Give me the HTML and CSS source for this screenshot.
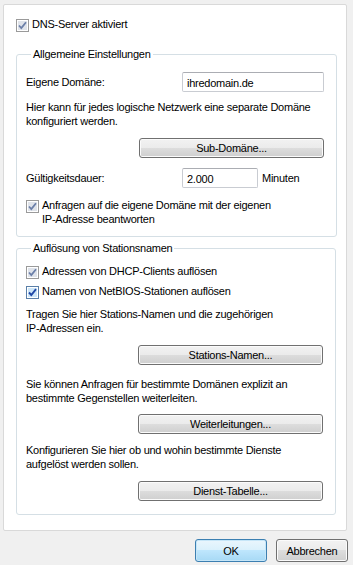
FILE: index.html
```html
<!DOCTYPE html>
<html lang="de">
  <head>
    <meta charset="UTF-8" />
    <title>DNS</title>
    <link rel="stylesheet" href="styles.css">
  </head>
  <body>
    <div class="panel">
      <label class="check top_check">
        <svg class="box" width="13" height="13" viewBox="0 0 13 13"><rect x="0.5" y="0.5" width="12" height="12" fill="#fff" stroke="#9a9a9a"/><rect x="2" y="2" width="9" height="9" fill="#dfe3ea"/><path d="M3 6.5 L5.3 9 L10 3.2" fill="none" stroke="#6b7fa8" stroke-width="1.8"/></svg>
        <span>DNS-Server aktiviert</span>
      </label>

      <fieldset class="group">
        <legend>Allgemeine Einstellungen</legend>
        <div class="row first">
          <span class="label">Eigene Domäne:</span>
          <div class="field wide">ihredomain.de</div>
        </div>
        <p class="text">Hier kann für jedes logische Netzwerk eine separate Domäne<br>konfiguriert werden.</p>
        <button class="btn">Sub-Domäne...</button>
        <div class="row time_row">
          <span class="label">Gültigkeitsdauer:</span>
          <div class="field short">2.000</div>
          <span class="unit">Minuten</span>
        </div>
        <label class="check answer">
          <svg class="box" width="13" height="13" viewBox="0 0 13 13"><rect x="0.5" y="0.5" width="12" height="12" fill="#fff" stroke="#9a9a9a"/><rect x="2" y="2" width="9" height="9" fill="#dfe3ea"/><path d="M3 6.5 L5.3 9 L10 3.2" fill="none" stroke="#6b7fa8" stroke-width="1.8"/></svg>
          <span>Anfragen auf die eigene Domäne mit der eigenen<br>IP-Adresse beantworten</span>
        </label>
      </fieldset>

      <fieldset class="group second">
        <legend>Auflösung von Stationsnamen</legend>
        <label class="check dhcp">
          <svg class="box" width="13" height="13" viewBox="0 0 13 13"><rect x="0.5" y="0.5" width="12" height="12" fill="#fff" stroke="#9a9a9a"/><rect x="2" y="2" width="9" height="9" fill="#dfe3ea"/><path d="M3 6.5 L5.3 9 L10 3.2" fill="none" stroke="#6b7fa8" stroke-width="1.8"/></svg>
          <span>Adressen von DHCP-Clients auflösen</span>
        </label>
        <label class="check netbios">
          <svg class="box" width="13" height="13" viewBox="0 0 13 13"><rect x="0.5" y="0.5" width="12" height="12" fill="#fff" stroke="#5a7fa8"/><rect x="2" y="2" width="9" height="9" fill="#cde6f8"/><path d="M3 6.5 L5.3 9 L10 3.2" fill="none" stroke="#1f47a6" stroke-width="1.9"/></svg>
          <span>Namen von NetBIOS-Stationen auflösen</span>
        </label>
        <p class="text">Tragen Sie hier Stations-Namen und die zugehörigen<br>IP-Adressen ein.</p>
        <button class="btn">Stations-Namen...</button>
        <p class="text gap">Sie können Anfragen für bestimmte Domänen explizit an<br>bestimmte Gegenstellen weiterleiten.</p>
        <button class="btn tight">Weiterleitungen...</button>
        <p class="text tight">Konfigurieren Sie hier ob und wohin bestimmte Dienste<br>aufgelöst werden sollen.</p>
        <button class="btn">Dienst-Tabelle...</button>
      </fieldset>
    </div>

    <div class="footer">
      <button class="btn dlg ok">OK</button>
      <button class="btn dlg">Abbrechen</button>
    </div>
  </body>
</html>
```

FILE: styles.css
```css
body {
  margin: 0;
  background: #f0f0f0;
  color: #000;
  font-family: "Liberation Sans", Arial, sans-serif;
  font-size: 11px;
  letter-spacing: -0.25px;
  line-height: 14px;
}
.panel {
  box-sizing: border-box;
  width: 344px;
  height: 527px;
  margin: 4px 0 0 3px;
  padding: 14px 0 0 12px;
  background: #fff;
  border: 1px solid #d9d9d9;
  border-radius: 2px;
}
.check {
  display: flex;
  align-items: flex-start;
}
.check .box {
  flex: none;
}
.check span {
  padding-left: 3px;
  margin-top: -2px;
}
.group {
  box-sizing: border-box;
  width: 320px;
  margin: 15px 0 0 0;
  padding: 0 12px 10px 9px;
  border: 1px solid #d5dfe5;
  border-radius: 3px;
}
.group legend {
  padding: 0 2px;
  margin-left: 5px;
  line-height: 14px;
}
.second {
  margin-top: 4px;
  padding-bottom: 13px;
}
.row {
  display: flex;
  align-items: center;
  height: 20px;
}
.row.first {
  margin-top: 11px;
}
.label {
  width: 156px;
  flex: none;
}
.field {
  box-sizing: border-box;
  height: 20px;
  padding: 3px 4px 2px;
  border: 1px solid #c9ccd2;
  border-top-color: #abadb3;
  border-radius: 2px;
  background: #fff;
}
.wide {
  width: 142px;
}
.short {
  width: 76px;
}
.unit {
  margin-left: 4px;
}
.text {
  margin: 8px 0 0 0;
}
.text.gap {
  margin-top: 12px;
}
.text.tight {
  margin-top: 9px;
}
.btn {
  display: block;
  box-sizing: border-box;
  width: 185px;
  height: 20px;
  margin: 10px 0 0 auto;
  padding: 0;
  font: inherit;
  letter-spacing: inherit;
  color: #000;
  border: 1px solid #707070;
  border-radius: 3px;
  background: linear-gradient(#f2f2f2 0%, #ebebeb 50%, #dddddd 50%, #cfcfcf 100%);
  box-shadow: inset 0 0 0 1px #fbfbfb;
}
.btn.tight {
  margin-top: 9px;
}
.time_row {
  margin-top: 10px;
}
.answer {
  margin-top: 12px;
}
.dhcp {
  margin-top: 11px;
}
.netbios {
  margin-top: 7px;
}
.footer {
  display: flex;
  justify-content: flex-end;
  gap: 9px;
  margin: 8px 5px 0 0;
}
.btn.dlg {
  width: 72px;
  height: 23px;
  margin: 0;
}
.btn.ok {
  border-color: #3c7fb1;
  background: linear-gradient(#eaf6fd 0%, #d9f0fc 50%, #bee6fd 50%, #a7d9f5 100%);
  box-shadow: inset 0 0 0 1px #c6e6f8;
}
```
